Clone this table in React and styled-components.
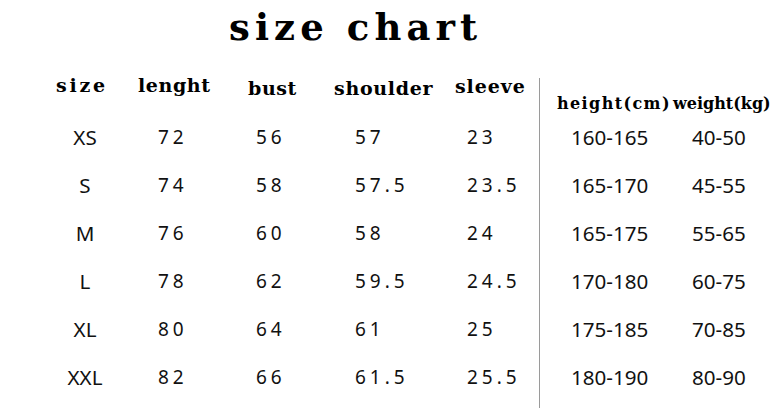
import React from "react";
import styled, { createGlobalStyle } from "styled-components";

const Global = createGlobalStyle`
  html, body { margin: 0; padding: 0; background: #fff; }
  body { width: 777px; height: 414px; overflow: hidden; }
`;

const Page = styled.div`
  width: 777px;
  height: 414px;
  display: flex;
  flex-direction: column;
  background: #fff;
`;

const Title = styled.h1`
  margin: 0 0 0 229px;
  height: 64px;
  font-family: "DejaVu Serif", serif;
  font-weight: bold;
  font-size: 37px;
  line-height: 54px;
  letter-spacing: 5.1px;
  color: #000;
  white-space: nowrap;
`;

const Grid = styled.div`
  display: grid;
  grid-template-columns: 90px 110px 86px 121px 84px 18px 116px 96px;
  grid-template-rows: repeat(7, 48px);
  margin-left: 48px;
`;

const Row = styled.div`
  display: contents;
`;

const Head = styled.div`
  align-self: start;
  padding-top: ${(p) => p.$top}px;
  padding-left: ${(p) => p.$left || 0}px;
  font-family: "DejaVu Serif", serif;
  font-weight: bold;
  font-size: ${(p) => (p.$small ? 16 : 19)}px;
  line-height: ${(p) => (p.$small ? 19 : 23)}px;
  letter-spacing: ${(p) => p.$ls}px;
  color: #000;
  white-space: nowrap;
`;

const Cell = styled.div`
  align-self: center;
  padding-top: 3px;
  padding-left: ${(p) => p.$left || 0}px;
  padding-right: ${(p) => (p.$center ? 16 : 0)}px;
  text-align: ${(p) => (p.$center ? "center" : "left")};
  font-family: "Noto Sans", sans-serif;
  font-size: ${(p) => (p.$spaced ? 19 : 20.6)}px;
  letter-spacing: ${(p) => (p.$spaced ? 4 : 0)}px;
  line-height: 1;
  color: #111;
  white-space: nowrap;
`;

const Divider = styled.div`
  grid-column: 6;
  grid-row: 1 / 8;
  width: 1px;
  background: #9a9a9a;
  margin-top: 14px;
  margin-bottom: -8px;
`;

const heads = [
  { text: "size", top: 10, left: 8, ls: 2.8 },
  { text: "lenght", top: 10, left: 0, ls: 0.6 },
  { text: "bust", top: 13, left: 0, ls: 0.6 },
  { text: "shoulder", top: 13, left: 0, ls: 0.7 },
  { text: "sleeve", top: 11, left: 0, ls: 0.9 },
  { text: "height(cm)", top: 30, left: 0, ls: 1.4, small: true },
  { text: "weight(kg)", top: 30, left: 0, ls: 0, small: true },
];

const rows = [
  ["XS", "72", "56", "57", "23", "160-165", "40-50"],
  ["S", "74", "58", "57.5", "23.5", "165-170", "45-55"],
  ["M", "76", "60", "58", "24", "165-175", "55-65"],
  ["L", "78", "62", "59.5", "24.5", "170-180", "60-75"],
  ["XL", "80", "64", "61", "25", "175-185", "70-85"],
  ["XXL", "82", "66", "61.5", "25.5", "180-190", "80-90"],
];

const cols = [
  { center: true },
  { left: 20, spaced: true },
  { left: 8, spaced: true },
  { left: 21, spaced: true },
  { left: 12, spaced: true },
  { left: 14 },
  { left: 19 },
];

export default function App() {
  return (
    <Page>
      <Global />
      <Title>size chart</Title>
      <Grid>
        <Divider />
        <Row>
          {heads.map((h) => (
            <Head key={h.text} $top={h.top} $left={h.left} $ls={h.ls} $small={h.small}>
              {h.text}
            </Head>
          ))}
        </Row>
        {rows.map((r, ri) => (
          <Row key={ri}>
            {r.map((v, ci) => (
              <Cell
                key={ci}
                $center={cols[ci].center}
                $left={cols[ci].left}
                $spaced={cols[ci].spaced}
              >
                {v}
              </Cell>
            ))}
          </Row>
        ))}
      </Grid>
    </Page>
  );
}
